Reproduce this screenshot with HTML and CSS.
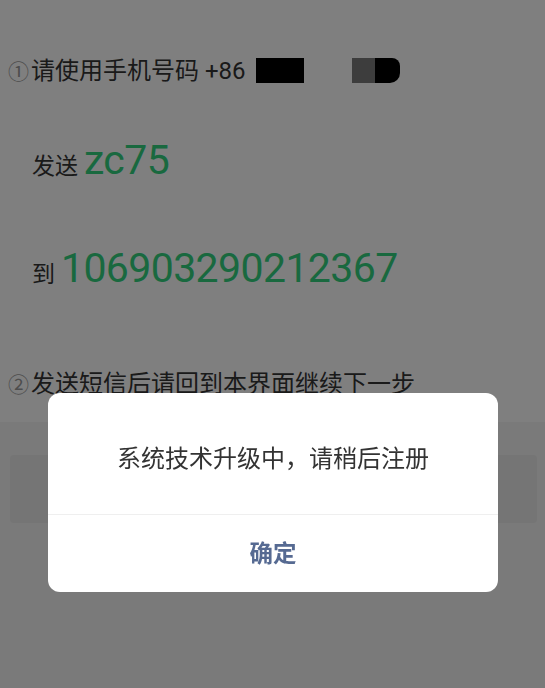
FILE: index.html
```html
<!DOCTYPE html>
<html lang="zh-CN">
<head>
<meta charset="utf-8">
<title>短信注册</title>
<link rel="stylesheet" href="styles.css">
</head>
<body>
<main class="page">
  <div class="row row-phone">
    <span class="num">①</span>请使用手机号码 +86<span class="mask mask-a"></span><span class="mask mask-b"><span class="mask-b1"></span><span class="mask-b2"></span></span>
  </div>
  <div class="row row-code">
    <span class="label">发送</span> <span class="green">zc75</span>
  </div>
  <div class="row row-to">
    <span class="label">到</span> <span class="green">106903290212367</span>
  </div>
  <div class="row row-step">
    <span class="num">②</span>发送短信后请回到本界面继续下一步
  </div>
  <div class="band">
    <div class="next-btn"></div>
  </div>
</main>
<div class="overlay">
  <div class="dialog">
    <div class="dialog-body">系统技术升级中，请稍后注册</div>
    <div class="dialog-foot">确定</div>
  </div>
</div>
</body>
</html>
```
FILE: styles.css
```css
html, body {
  margin: 0;
  padding: 0;
  height: 100%;
}
body {
  background: #ffffff;
  font-family: Roboto, "Noto Sans CJK SC", sans-serif;
  color: #343434;
  overflow: hidden;
}
.page {
  display: flex;
  flex-direction: column;
  min-height: 688px;
}
.row {
  white-space: nowrap;
  font-size: 24px;
}
.row-phone {
  margin-top: 51px;
  height: 40px;
  line-height: 40px;
  padding-left: 8px;
}
.num {
  color: #9a9a9a;
  font-size: 21px;
  margin-right: 2px;
}
.mask {
  display: inline-block;
  height: 25px;
  vertical-align: -4px;
}
.mask-a {
  width: 48px;
  background: #000;
  margin-left: 10px;
}
.mask-b {
  margin-left: 48px;
  width: 48px;
  display: inline-flex;
}
.mask-b1 {
  width: 23px;
  background: #7a7a7a;
}
.mask-b2 {
  flex: 1;
  background: #000;
  border-radius: 0 8px 10px 0;
}
.row-code, .row-to {
  padding-left: 32px;
  height: 48px;
  line-height: 48px;
}
.row-code {
  margin-top: 45px;
}
.row-to {
  margin-top: 60px;
}
.label {
  font-size: 23px;
}
.green {
  font-size: 41px;
  letter-spacing: -0.6px;
  color: #32d27e;
}
.row-step {
  margin-top: 72px;
  height: 40px;
  line-height: 40px;
  padding-left: 8px;
}
.band {
  margin-top: 18px;
  flex: 1;
  background: #f4f4f4;
  padding: 33px 8px 0 10px;
}
.next-btn {
  height: 68px;
  background: #eaeaea;
  border-radius: 4px;
}
.overlay {
  position: fixed;
  inset: 0;
  background: rgba(0, 0, 0, 0.5);
  display: flex;
  flex-direction: column;
  align-items: center;
  padding-top: 393px;
}
.dialog {
  width: 450px;
  margin-left: 1px;
  background: #fff;
  border-radius: 12px;
  overflow: hidden;
}
.dialog-body {
  height: 122px;
  display: flex;
  align-items: center;
  justify-content: center;
  padding-top: 6px;
  box-sizing: border-box;
  font-size: 24px;
  color: #333;
  border-bottom: 1px solid #efefef;
}
.dialog-foot {
  height: 77px;
  line-height: 79px;
  text-align: center;
  font-size: 23.5px;
  font-weight: 700;
  color: #566a92;
}
```
